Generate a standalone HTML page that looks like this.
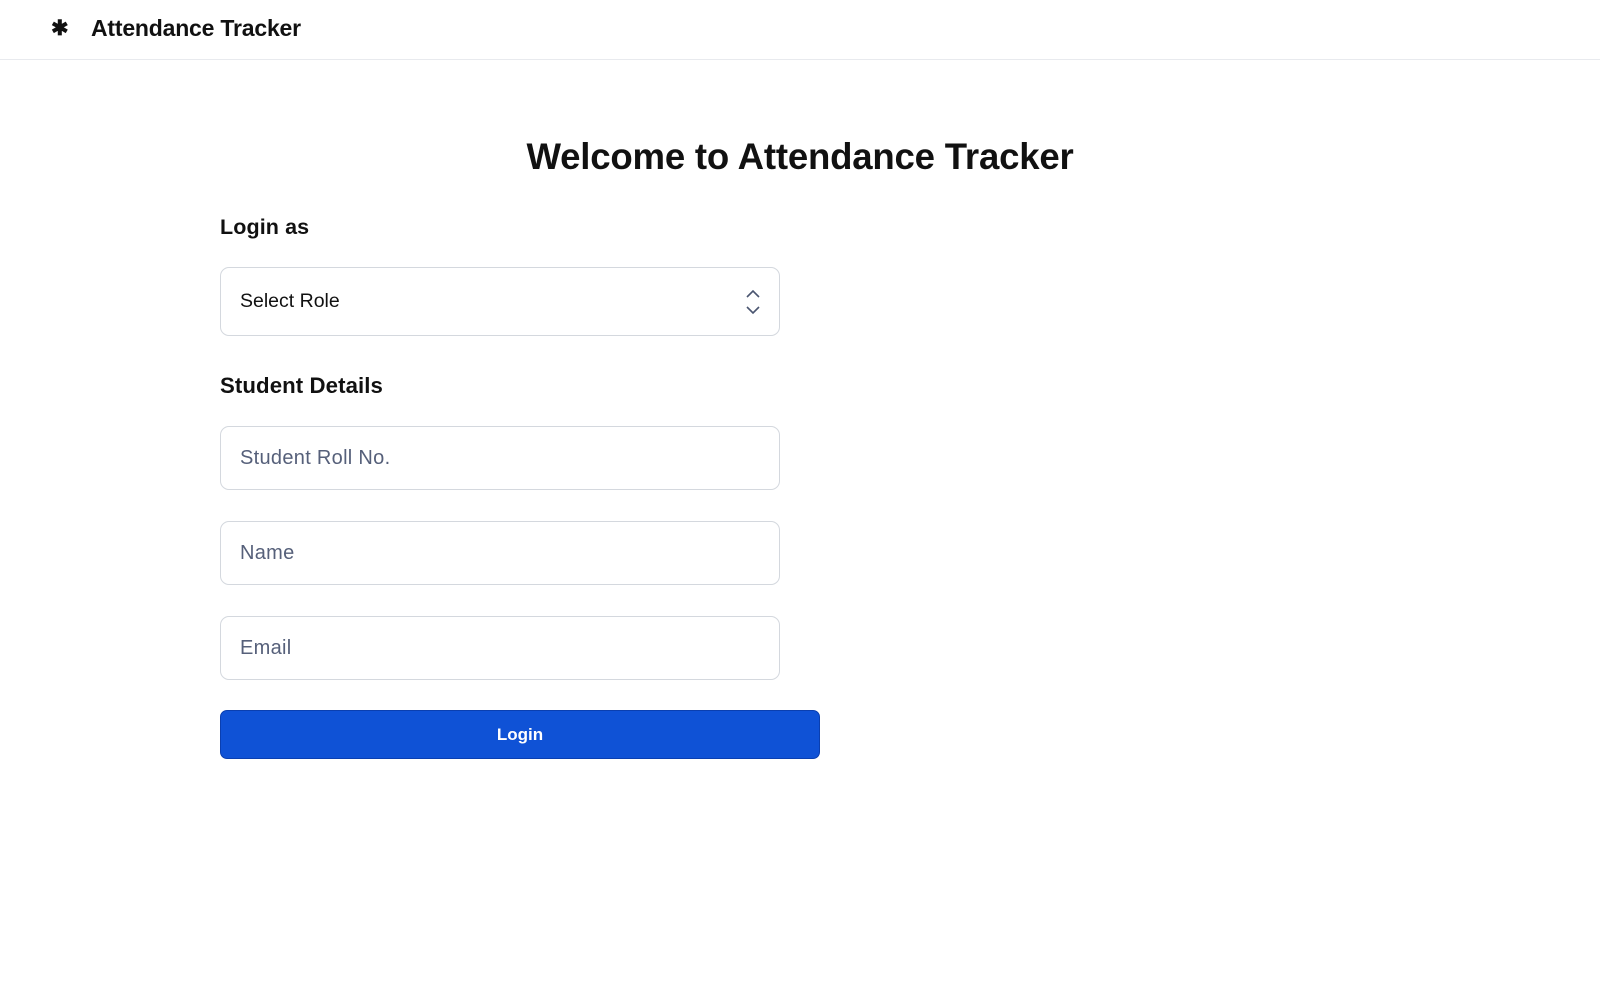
<!DOCTYPE html>
<html><head><meta charset="utf-8"><style>
*{box-sizing:border-box;margin:0;padding:0}
body{width:1600px;height:1000px;background:#fff;font-family:"Liberation Sans",sans-serif;color:#111;position:relative;overflow:hidden}
.hdr{position:absolute;left:0;top:0;width:1600px;height:60px;border-bottom:1px solid #e8eaee}
.logo{position:absolute;left:51px;top:16px;font-size:21px;font-weight:bold}
.brand{position:absolute;left:91px;top:15px;font-size:23px;font-weight:bold;letter-spacing:-0.2px}
h1{position:absolute;left:0;width:1600px;top:136px;text-align:center;font-size:36.6px;font-weight:bold;letter-spacing:-0.2px}
.lbl{position:absolute;left:220px;font-size:21.5px;font-weight:bold;letter-spacing:0.1px}
.box{position:absolute;left:220px;width:560px;border:1px solid #d4d8de;border-radius:9px;font-size:19.5px;padding-left:19px;display:flex;align-items:center}
.ph{color:#56607a;font-size:20px;letter-spacing:0.3px}
.btn{position:absolute;left:220px;top:710px;width:600px;height:49px;background:#0f52d6;border:1px solid #0a3fb0;border-radius:7px;color:#fff;font-weight:bold;font-size:17px;display:flex;align-items:center;justify-content:center}
</style></head><body>
<div class="hdr"><div class="logo">✱</div><div class="brand">Attendance Tracker</div></div>
<h1>Welcome to Attendance Tracker</h1>
<div class="lbl" style="top:215px">Login as</div>
<div class="box" style="top:267px;height:69px">Select Role
<svg style="position:absolute;right:18px;top:21px" width="16" height="26" viewBox="0 0 16 26" fill="none" stroke="#4a5570" stroke-width="1.6"><path d="M2 8 L8 2 L14 8"/><path d="M2 18 L8 24 L14 18"/></svg></div>
<div class="lbl" style="top:373px;font-size:22.2px">Student Details</div>
<div class="box ph" style="top:426px;height:64px">Student Roll No.</div>
<div class="box ph" style="top:521px;height:64px">Name</div>
<div class="box ph" style="top:616px;height:64px">Email</div>
<div class="btn">Login</div>
</body></html>
